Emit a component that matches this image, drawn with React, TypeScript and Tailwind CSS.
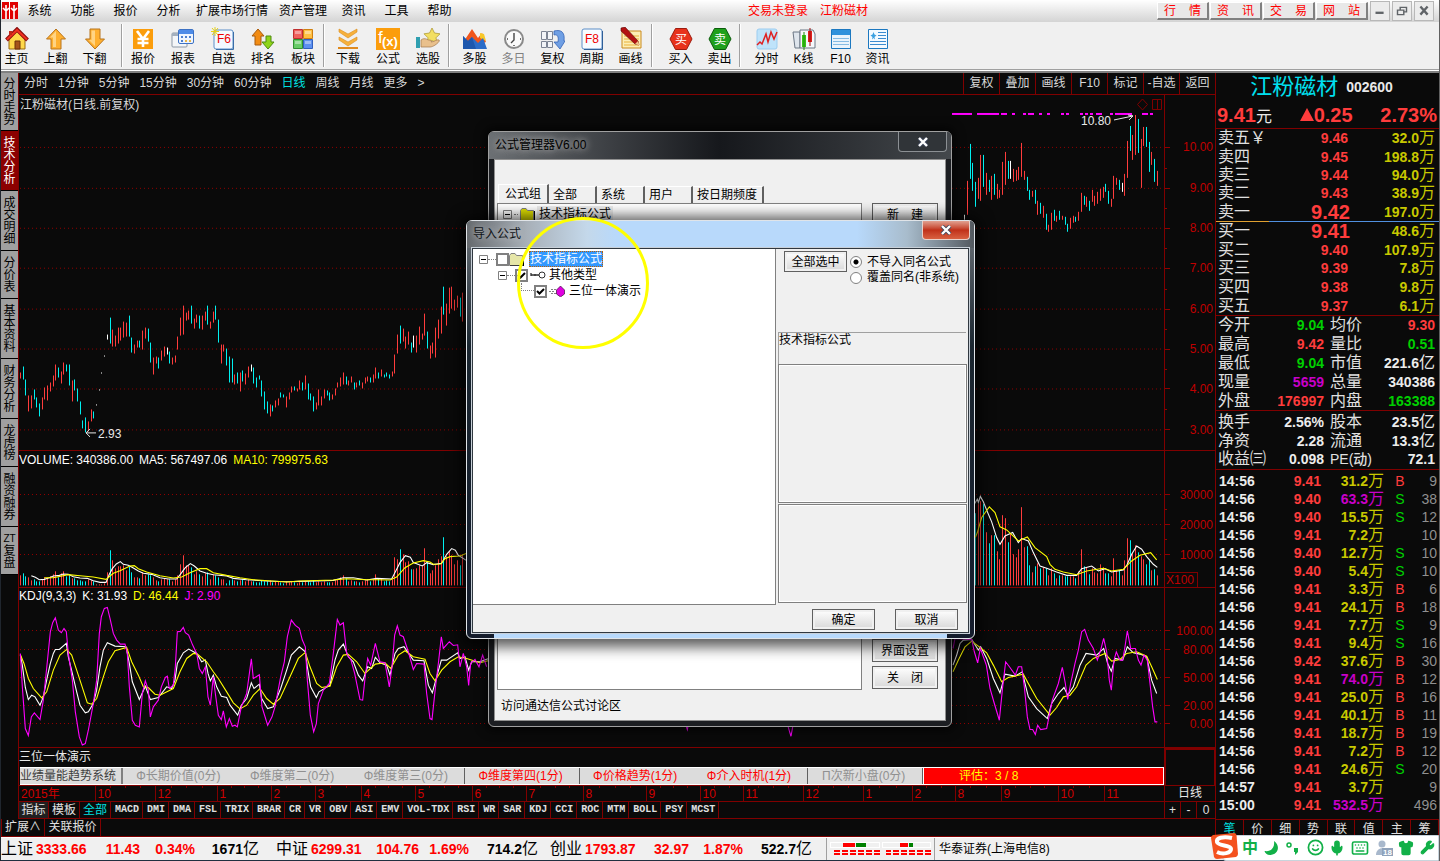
import type { ReactNode } from 'react';
import { Keyboard, Mic, Shirt, Smile, Wrench } from 'lucide-react';

/* ---------- chart data ---------- */

type Block = { x0: number; y0: number; rows: string };

// x, high, low, kind (r up / c down / w flat), volume. Three units make one pixel.
const bars: Block[] = [
  {
    x0: 0,
    y0: 70,
    rows: `61 911 930 r 10,70 891 930 c 12,76 930 978 c 9,85 978 1026 r 8,94 978 1018 r 5,103 960 990 c 6,109 984 1015 c 4,118 1002 1041 c 4,127 984 1020 r 6,133 954 990 r 8,142 950 996 r 7,151 939 966 r 9,160 920 954 r 11,166 887 936 r 14,175 896 927 c 8,184 908 945 r 12,190 879 915 r 14,199 885 906 c 9,208 887 951 c 10,217 933 996 r 7,223 930 962 c 7,232 957 996 c 5,241 998 1038 c 5,247 1053 1077 c 4,256 1046 1090 c 4,265 1056 1085 r 6,274 1020 1056 r 5,280 1026 1047 c 4,289 1005 1008 w 1,298 960 963 w 1,304 909 912 w 1,313 858 861 w 2,322 797 813 w 13,331 744 822 c 35,337 780 831 r 25,346 798 831 r 17,355 774 822 r 19,361 774 812 r 19,370 756 804 r 20,379 759 801 r 15,388 738 801 c 19,394 804 849 c 13,403 825 852 r 8,412 815 837 r 8,418 815 837 c 7,427 783 840 r 13,436 774 807 r 10,445 777 816 c 11,451 819 879 c 10,460 864 915 r 8,469 861 882 r 5,475 864 897 c 4,484 843 873 r 6,493 831 861 r 7,502 834 855 w 6,508 846 882 c 6,517 864 885 r 4,526 858 879 r 6,532 801 840 r 10,541 744 798 r 21,550 708 795 r 30,559 729 753 r 20,565 723 750 r 20,574 708 762 c 18,583 749 780 r 11,589 735 759 r 14,598 738 777 c 11,607 738 780 r 9,616 726 753 r 12,622 708 765 c 13,631 756 777 r 6,640 726 759 r 11,646 708 750 c 10,655 750 819 c 8`,
  },
  {
    x0: 220,
    y0: 270,
    rows: `4 225 282 r 6,10 225 246 r 6,19 237 288 c 2,28 261 339 c 5,37 267 339 c 6,43 315 345 r 5,52 309 342 c 4,61 309 366 r 5,67 303 336 c 6,76 312 345 r 4,85 291 324 r 6,94 285 306 w 4,100 294 342 c 4,109 324 354 c 3,118 318 330 c 3,124 333 381 c 5,133 366 420 c 4,142 396 432 c 4,151 405 441 r 5,157 408 426 c 3,166 393 414 r 4,175 387 408 r 4,181 369 384 c 3,190 375 384 c 2,199 381 414 r 4,208 369 390 r 3,214 351 369 r 4,223 351 363 c 3,232 357 366 r 2,238 333 360 r 3,247 339 363 c 3,256 318 360 r 4,265 342 390 c 4,271 372 393 c 3,280 381 426 c 5,289 399 420 r 3,295 360 408 r 4,304 381 408 r 3,313 360 387 r 4,322 363 378 c 3,328 369 393 c 3,337 375 390 r 3,346 357 378 r 5,352 339 354 r 6,361 324 351 r 8,370 309 345 r 10,379 321 345 c 7,385 333 348 r 4,394 321 339 r 5,403 339 360 c 4,409 339 354 r 4,418 333 348 c 3,427 339 357 r 4,436 324 342 r 5,442 321 336 r 6,451 324 339 c 4,460 315 339 r 6,466 294 327 r 11,475 309 327 c 7,484 300 321 r 7,493 315 324 c 4,499 309 321 c 5,508 315 327 c 4,517 306 321 r 6,523 255 312 r 28,532 195 252 r 26,541 168 222 c 36,550 177 216 r 31,556 201 237 r 23,565 186 225 r 24,574 219 249 c 16,580 198 234 w 16,589 198 249 r 17,598 171 225 r 20,607 192 210 r 19,613 132 198 r 37,622 186 237 c 23,631 228 267 r 12,637 219 252 r 15,646 174 264 r 20,655 150 207 r 26,664 111 192 r 29,670 51 135 c 48,679 102 168 r 29,688 54 132 r 34,694 51 117 r 30,703 90 123 r 21,712 78 114 r 25,721 84 141 c 20,727 69 156 r 31`,
  },
  {
    x0: 940,
    y0: 0,
    rows: `73 645 660 w 60,82 543 645 r 70,91 432 537 c 75,97 489 573 c 70,106 546 621 c 72,115 534 597 r 81,121 465 603 r 84,130 465 561 c 81,139 519 585 r 53,148 540 576 c 42,154 528 600 r 50,163 522 585 c 50,172 552 597 r 34,178 570 594 r 26,187 486 585 r 70,196 456 555 r 67,205 483 537 c 43,211 483 537 w 51,220 507 546 r 31,229 510 543 r 28,235 501 540 r 36,244 429 531 r 78,253 513 540 r 38,262 531 573 c 39,268 570 600 c 20,277 573 591 r 13,286 570 612 c 19,292 603 645 r 22,301 609 642 c 17,310 618 655 r 18,319 642 690 c 17,325 675 696 r 10,334 639 690 r 17,343 630 663 c 12,349 648 666 r 7,358 633 660 c 10,367 648 660 r 10,376 651 675 c 9,382 672 696 c 9,391 654 687 r 9,400 648 669 r 9,406 651 666 c 7,415 636 663 r 14,424 579 636 r 36,433 588 615 c 19,439 591 621 r 18,448 603 633 c 11,457 570 606 r 17,463 588 618 r 13,472 576 612 r 12,481 567 603 r 21,490 561 594 r 18,496 552 576 c 12,505 573 612 c 12,514 597 621 r 9,520 528 597 r 27,529 534 555 r 15,538 540 570 c 15,547 549 576 w 10,553 522 588 r 25,562 423 534 r 47,571 378 453 c 45,577 405 480 r 32,586 345 465 r 40,595 357 459 c 33,604 417 564 r 29,610 381 438 r 26,619 381 441 c 21,628 426 516 c 25,634 456 495 r 15,643 477 546 c 16,652 513 558 r 10`,
  },
];

const barColor: Record<string, string> = { r: '#ff3c3c', c: '#00f0f0', w: '#ffffff' };

const candles = bars.flatMap(({ x0, y0, rows }) =>
  rows.split(',').map((row) => {
    const [x, high, low, kind, vol] = row.split(' ');
    return {
      x: x0 + Math.floor(+x / 3),
      top: y0 + Math.floor(+high / 3),
      height: Math.max(1, Math.round((+low - +high) / 3)),
      fill: barColor[kind],
      volFill: kind === 'c' ? barColor.c : barColor.r,
      vol: +vol,
    };
  }),
);

const LEFT = 'translate(0 440) scale(0.33333)';
const RIGHT = 'translate(940 470) scale(0.33333)';

const volumeLines = [
  { t: LEFT, c: '#fff', p: '94,409 106,414 118,421 133,420 148,415 160,410 178,408 190,404 205,405 220,412 240,416 262,417 280,424 300,429 318,429 328,405 337,388 349,374 361,367 370,375 385,378 400,386 415,395 430,402 455,405 480,415 505,419 530,419 541,405 556,385 571,373 583,380 600,395 620,402 640,406 680,410 700,417 740,421 800,425 860,427 900,426 950,425 1000,423 1030,415 1060,415 1100,422 1130,417 1175,419 1190,390 1200,370 1216,349 1231,354 1240,370 1267,380 1280,370 1300,376 1325,372 1340,345 1355,328 1366,333 1375,348 1400,364' },
  { t: LEFT, c: '#ff0', p: '133,415 160,415 205,406 240,409 280,413 318,420 340,402 360,394 390,380 403,379 415,388 440,398 480,409 520,416 545,413 570,400 600,388 620,388 640,400 680,408 720,415 760,421 860,428 900,425 1000,422 1040,418 1100,421 1130,421 1170,422 1190,413 1215,385 1240,371 1270,364 1290,368 1300,375 1322,374 1335,358 1350,352 1380,350 1400,342' },
  { t: RIGHT, c: '#fff', p: '100,110 112,90 115,100 121,82 130,98 142,128 155,158 170,205 180,225 195,200 218,190 235,220 245,208 265,215 280,250 300,290 320,297 350,308 380,318 410,318 425,298 455,290 475,305 495,298 515,308 550,302 562,285 575,255 590,230 605,240 620,262 640,285 652,294' },
  { t: RIGHT, c: '#ff0', p: '106,205 112,190 125,145 148,113 165,130 180,173 200,182 235,215 262,203 285,235 320,262 330,285 345,300 370,308 410,316 440,305 490,297 515,305 550,300 575,275 600,258 632,250 650,272' },
];

const kdjLines = [
  { t: LEFT, c: '#fff', p: '61,645 67,675 76,742 85,778 95,765 105,770 120,795 130,770 142,710 151,670 160,640 166,628 178,628 199,610 205,650 217,700 230,755 240,795 256,818 265,815 280,790 290,750 300,680 310,630 322,608 345,618 378,620 388,670 397,725 418,778 436,738 451,778 475,772 500,740 515,745 525,720 532,670 550,638 566,627 590,640 605,665 616,660 624,700 631,722 640,705 650,740 664,768 680,772 690,795 713,825 724,795 740,775 754,728 762,745 778,732 785,775 803,805 820,800 842,745 860,690 874,645 898,620 916,635 922,680 932,740 949,772 957,755 990,735 1005,660 1015,630 1030,612 1045,650 1060,665 1075,705 1088,722 1103,680 1115,685 1126,652 1140,668 1160,675 1170,705 1185,640 1195,625 1212,620 1240,660 1272,662 1285,735 1297,758 1310,710 1324,660 1340,660 1373,638 1380,655 1395,650 1406,690 1415,665 1440,665 1464,656' },
  { t: LEFT, c: '#ff0', p: '61,643 72,670 85,715 100,745 125,773 140,755 160,690 180,645 200,628 215,645 235,705 262,788 275,792 290,775 310,710 325,665 345,632 380,622 395,665 415,705 430,740 445,742 465,762 480,765 520,745 540,695 560,655 580,640 592,642 620,665 640,695 655,715 680,755 700,788 720,806 740,795 760,765 780,745 800,775 820,792 840,775 870,710 895,655 916,637 930,680 950,730 965,742 990,738 1010,680 1030,645 1045,643 1070,665 1095,700 1126,672 1155,668 1172,685 1195,645 1215,632 1240,650 1275,657 1290,700 1305,722 1325,690 1350,665 1375,650 1400,655 1440,668 1464,662' },
  { t: LEFT, c: '#f0f', p: '61,640 67,740 76,865 85,886 94,830 103,818 120,838 130,780 142,665 151,575 158,548 166,533 175,570 184,578 192,565 199,575 205,640 217,720 226,815 238,890 247,914 256,910 265,870 280,790 290,720 298,580 304,530 313,505 322,502 330,535 340,580 350,600 361,612 375,612 382,640 388,740 397,840 406,855 418,860 427,760 436,722 445,750 451,830 460,800 475,780 484,740 496,712 502,708 508,745 520,735 526,680 532,575 541,574 550,562 556,578 566,585 578,615 590,640 598,685 607,700 616,680 624,770 631,795 640,710 646,760 655,825 664,838 670,812 679,860 688,835 697,858 705,855 712,860 724,800 740,760 754,656 760,715 778,704 786,800 803,855 816,830 825,800 842,710 853,665 862,590 874,540 886,556 898,565 907,600 916,620 922,720 931,825 941,875 949,850 955,790 970,750 988,730 1000,640 1012,538 1020,555 1030,548 1040,640 1053,660 1064,700 1080,778 1088,780 1095,715 1103,655 1112,675 1126,610 1140,665 1155,668 1168,740 1176,680 1184,585 1192,557 1200,585 1210,590 1225,635 1240,688 1250,670 1272,672 1280,760 1290,835 1296,838 1306,745 1315,670 1324,590 1330,625 1348,605 1360,616 1373,614 1380,680 1390,640 1400,680 1406,736 1412,670 1425,658 1437,680 1448,645 1460,680' },
  { t: LEFT, c: '#f0f', p: '2050,830 2062,868 2070,830' },
  { t: LEFT, c: '#f0f', p: '2355,820 2366,865 2373,888 2379,855 2385,820' },
  { t: RIGHT, c: '#fff', p: '39,585 50,555 60,520 70,510 95,508 115,540 122,530 140,565 160,625 180,668 195,612 225,618 247,605 255,640 265,680 290,715 322,745 335,700 355,670 372,652 383,675 400,650 420,585 438,550 470,555 491,535 503,580 514,603 525,565 548,570 562,530 580,548 600,552 620,560 635,630 650,670' },
  { t: RIGHT, c: '#ff0', p: '39,605 55,570 75,530 95,513 120,532 140,548 160,585 185,635 205,622 250,612 265,640 290,685 330,735 350,712 370,680 390,675 410,650 438,585 460,565 495,550 515,573 540,568 560,550 590,545 620,558 635,590 652,628' },
  { t: RIGHT, c: '#f0f', p: '39,535 45,505 95,508 103,545 113,578 121,535 130,560 139,585 150,655 163,700 178,750 188,650 197,575 210,592 226,615 235,590 245,590 253,650 262,740 270,778 278,778 286,793 293,765 302,778 320,775 328,735 337,690 355,640 367,592 376,640 383,688 392,640 405,580 415,540 425,485 434,478 445,510 460,535 472,570 482,540 491,505 500,545 508,630 514,660 522,570 529,545 540,570 548,570 555,530 562,482 572,535 586,535 595,570 603,585 612,555 622,570 630,640 638,710 645,755 652,755' },
];

const signalMarks = [
  [952, 20], [977, 22], [1001, 6], [1012, 3], [1023, 3], [1028, 6], [1039, 3], [1047, 3], [1061, 3], [1066, 3],
  [1080, 3], [1085, 3], [1090, 3], [1096, 6], [1110, 3], [1115, 17], [1142, 6], [1150, 3],
];

const months: [number, string][] = [
  [95, '10'], [155, '12'], [217, '1'], [271, '2'], [315, '3'], [361, '4'], [415, '5'], [472, '6'], [526, '7'], [583, '8'],
  [646, '9'], [700, '10'], [743, '11'], [803, '12'], [863, '1'], [912, '2'], [955, '8'], [1001, '9'], [1058, '10'], [1104, '11'],
];

/* ---------- text data ---------- */

const sideTabs = ['分 时 走 势', '技 术 分 析', '成 交 明 细', '分 价 表', '基 本 资 料', '财 务 分 析', '龙 虎 榜', '融 资 融 券', 'ZT 复 盘'];
const periods = ['分时', '1分钟', '5分钟', '15分钟', '30分钟', '60分钟', '日线', '周线', '月线', '更多', '>'];
const chartTools = ['复权', '叠加', '画线', 'F10', '标记', '-自选', '返回'];
const indicators = ['MACD', 'DMI', 'DMA', 'FSL', 'TRIX', 'BRAR', 'CR', 'VR', 'OBV', 'ASI', 'EMV', 'VOL-TDX', 'RSI', 'WR', 'SAR', 'KDJ', 'CCI', 'ROC', 'MTM', 'BOLL', 'PSY', 'MCST'];

const scores = [
  { text: 'Φ长期价值(0分)', hot: false, bar: false },
  { text: 'Φ维度第二(0分)', hot: false, bar: false },
  { text: 'Φ维度第三(0分)', hot: false, bar: true },
  { text: 'Φ维度第四(1分)', hot: true, bar: true },
  { text: 'Φ价格趋势(1分)', hot: true, bar: false },
  { text: 'Φ介入时机(1分)', hot: true, bar: true },
  { text: 'Π次新小盘(0分)', hot: false, bar: true },
];

const asks = [
  ['卖五', '9.46', '32.0'],
  ['卖四', '9.45', '198.8'],
  ['卖三', '9.44', '94.0'],
  ['卖二', '9.43', '38.9'],
  ['卖一', '9.42', '197.0'],
];
const bids = [
  ['买一', '9.41', '48.6'],
  ['买二', '9.40', '107.9'],
  ['买三', '9.39', '7.8'],
  ['买四', '9.38', '9.8'],
  ['买五', '9.37', '6.1'],
];

const RED = 'text-[#ff3c3c]';
const GREEN = 'text-[#00d000]';
const PURPLE = 'text-[#c800c8]';
const WHITE = 'text-[#ececec]';

const stats = [
  ['今开', '9.04', GREEN, '均价', '9.30', RED],
  ['最高', '9.42', RED, '量比', '0.51', GREEN],
  ['最低', '9.04', GREEN, '市值', '221.6亿', WHITE],
  ['现量', '5659', PURPLE, '总量', '340386', WHITE],
  ['外盘', '176997', RED, '内盘', '163388', GREEN],
];
const ratios = [
  ['换手', '2.56%', WHITE, '股本', '23.5亿', WHITE],
  ['净资', '2.28', WHITE, '流通', '13.3亿', WHITE],
  ['收益㈢', '0.098', WHITE, 'PE(动)', '72.1', WHITE],
];

const ticks = [
  ['14:56', '9.41', '31.2', 'B', '9'],
  ['14:56', '9.40', '63.3', 'S', '38'],
  ['14:56', '9.40', '15.5', 'S', '12'],
  ['14:56', '9.41', '7.2', '', '10'],
  ['14:56', '9.40', '12.7', 'S', '10'],
  ['14:56', '9.40', '5.4', 'S', '10'],
  ['14:56', '9.41', '3.3', 'B', '6'],
  ['14:56', '9.41', '24.1', 'B', '18'],
  ['14:56', '9.41', '7.7', 'S', '9'],
  ['14:56', '9.41', '9.4', 'S', '16'],
  ['14:56', '9.42', '37.6', 'B', '30'],
  ['14:56', '9.41', '74.0', 'B', '12'],
  ['14:56', '9.41', '25.0', 'B', '16'],
  ['14:56', '9.41', '40.1', 'B', '11'],
  ['14:56', '9.41', '18.7', 'B', '19'],
  ['14:56', '9.41', '7.2', 'B', '12'],
  ['14:56', '9.41', '24.6', 'S', '20'],
  ['14:57', '9.41', '3.7', '', '9'],
  ['15:00', '9.41', '532.5', '', '496'],
];

/* ---------- toolbar icons ---------- */

function Ico({ children }: { children: ReactNode }) {
  return (
    <svg aria-hidden viewBox="0 0 24 24" className="h-6 w-6">
      {children}
    </svg>
  );
}

const icons: Record<string, ReactNode> = {
  主页: (
    <Ico>
      <path d="M4 12 12 4l8 8v10H4z" fill="#ffd84a" stroke="#9a6a10" />
      <path d="M10 14h5v8h-5z" fill="#a5541a" stroke="#6e3008" />
      <path d="M1.500 13 12 2.500 22.500 13" fill="none" stroke="#8c0f0f" strokeWidth="4" />
      <path d="M2 12.500 12 3 22 12.500" fill="none" stroke="#f03020" strokeWidth="2" />
      <path d="M4 4h3v4H4z" fill="#c02818" />
    </Ico>
  ),
  上翻: (
    <Ico>
      <path d="M12 2 2.500 12H7v10h10V12h4.500z" fill="#ffb030" stroke="#b8741c" strokeLinejoin="round" />
      <path d="M12 4 6 10.500h3V20h3z" fill="#ffd484" />
    </Ico>
  ),
  下翻: (
    <Ico>
      <path d="M12 22 2.500 12H7V2h10v10h4.500z" fill="#ffb030" stroke="#b8741c" strokeLinejoin="round" />
      <path d="M8.500 3.500H12V19l-6-6h2.500z" fill="#ffd484" />
    </Ico>
  ),
  报价: (
    <Ico>
      <path d="M2 2h20v20H2z" fill="#fb9d0c" />
      <path d="m6 4 6 8 6-8M12 11v9M6.500 12h11M6.500 16h11" fill="none" stroke="#fff" strokeWidth="2.600" />
    </Ico>
  ),
  报表: (
    <Ico>
      <rect x="1" y="6" width="15" height="14" rx="1" fill="#f4f6f8" stroke="#8d98a5" />
      <path d="M1 6h15v3H1z" fill="#a4b0be" />
      <rect x="7.500" y="2.500" width="15" height="14" rx="1.500" fill="#eef5ff" stroke="#3d72c4" />
      <path d="M8 3h14v4H8z" fill="#4d8be8" />
      <path d="M10 9h2v2h-2zM14 9h2v2h-2zM18 9h2v2h-2zM10 13h2v2h-2z" fill="#4d7fcf" />
      <path d="M14 13h2v2h-2zM18 13h2v2h-2z" fill="#e9b64a" />
    </Ico>
  ),
  自选: (
    <Ico>
      <rect x="3" y="3" width="19" height="19" rx="2" fill="#f4f9ff" stroke="#5c8fc8" />
      <path d="M22.500 5v17.500H5" fill="none" stroke="#3a6ea8" />
      <path d="M4 0v9M0 4.500h8M1 1l6 7M7 1 1 8" stroke="#e8d018" />
      <text x="6" y="16" fontSize="12" fill="#f00000">F6</text>
    </Ico>
  ),
  排名: (
    <Ico>
      <path d="m7 2-6 7h3v9h6V9h3z" fill="#f28c14" stroke="#a85a0c" />
      <path d="m17 22 6-7h-3V9h-5v6h-4z" fill="#8fd418" stroke="#4f8c10" />
    </Ico>
  ),
  板块: (
    <Ico>
      <path d="M2.500 2.500h9v9h-9z" fill="#f0605c" stroke="#c03030" />
      <path d="M12.500 2.500h9v9h-9z" fill="#ffc043" stroke="#d08010" />
      <path d="M2.500 12.500h9v9h-9z" fill="#66cc66" stroke="#309030" />
      <path d="M12.500 12.500h9v9h-9z" fill="#5c90f0" stroke="#3060c0" />
      <path d="M4 4h6v3H4zM14 4h6v3h-6zM4 14h6v3H4zM14 14h6v3h-6z" fill="#fff" opacity=".4" />
    </Ico>
  ),
  下载: (
    <Ico>
      <path d="m3 2 9 5 9-5v3l-9 6-9-6zM3 10l9 5 9-5v3l-9 6-9-6z" fill="#f7b13c" stroke="#d98c1c" strokeWidth=".6" />
      <path d="M2 20h20v2H2z" fill="#e08a1e" />
    </Ico>
  ),
  公式: (
    <Ico>
      <path d="M0 1h24v22H0z" fill="#fb9d0c" />
      <text x="2" y="16" fontSize="17" fill="#fff">f</text>
      <text x="6" y="19" fontSize="13" fontWeight="bold" fill="#fff">(x)</text>
    </Ico>
  ),
  选股: (
    <Ico>
      <path d="m16 1 2.500 5 5.500.8-4 4 1 5.200-5-2.500-5 2.500 1-5.200-4-4 5.500-.8z" fill="#f3df62" stroke="#a8922a" strokeWidth=".7" />
      <path d="M5 13c4-3 6 0 8 0s3 1 2 2c3 0 6-3 8-2s-5 7-9 7H5z" fill="#e9c08c" stroke="#a1774a" strokeWidth=".7" />
      <path d="M0 10h4v11H0z" fill="#2f9fb0" />
    </Ico>
  ),
  多股: (
    <Ico>
      <path d="m1 14 8-12 6 9 4-5 4 9-10 4z" fill="#f0551c" />
      <path d="m17 6 4 1 2 7-6-3z" fill="#f8c828" />
      <path d="m0 9 5 5 4-4 6 6 5-5 4 11H0z" fill="#2b6cc8" />
      <path d="m0 9 5 5 4-4 4 12H0z" fill="#1d57ad" />
    </Ico>
  ),
  多日: (
    <Ico>
      <circle cx="12" cy="12" r="9" fill="#fafafa" stroke="#8a8a8a" strokeWidth="2" />
      <path d="M12 6v7l-3 3M5 12h1M18 12h1M12 18v1" fill="none" stroke="#444" strokeWidth="1.400" />
    </Ico>
  ),
  复权: (
    <Ico>
      <path d="M.5 4.500h5v8h-5zM6.500 4.500h5v8h-5zM.5 14.500h5v6h-5zM6.500 14.500h5v6h-5z" fill="#f2f4f8" stroke="#7c8494" />
      <path d="M13 4c8-2 11 2 10 10h1l-5 8-6-7h4c1-6-1-8-4-7z" fill="#6f9fe4" stroke="#3463b5" strokeWidth=".8" />
    </Ico>
  ),
  周期: (
    <Ico>
      <rect x="2" y="2" width="20" height="20" rx="2" fill="#f8fbff" stroke="#5c8fc8" />
      <path d="M22.500 4v18.500H4" fill="none" stroke="#2f5f98" />
      <text x="5" y="16" fontSize="12" fill="#f00000">F8</text>
    </Ico>
  ),
  画线: (
    <Ico>
      <path d="M3 4h19v17H3z" fill="#fdeeb4" stroke="#c98a1c" />
      <path d="M5 9h15M5 12h15M5 15h15M5 18h15" stroke="#e9b13a" />
      <path d="m2 1 4-1 13 14 1 4-4-1L2 4z" fill="#b31212" stroke="#5c0808" strokeWidth=".6" />
      <path d="m16 17 3-3 1.500 4.500z" fill="#f1c48c" />
    </Ico>
  ),
  买入: (
    <Ico>
      <path d="M6.500 1.500h11L23 12l-5.500 10.500h-11L1 12z" fill="#e8321c" stroke="#9c1c10" />
      <text x="6" y="17" fontSize="12" fill="#fff">买</text>
    </Ico>
  ),
  卖出: (
    <Ico>
      <path d="M6.500 1.500h11L23 12l-5.500 10.500h-11L1 12z" fill="#1fa01c" stroke="#0c5c0c" />
      <text x="6" y="17" fontSize="12" fill="#fff">卖</text>
    </Ico>
  ),
  分时: (
    <Ico>
      <rect x="2" y="2" width="20" height="20" rx="2" fill="#bfe3fa" stroke="#9ccdf0" />
      <path d="m2 18 3-3 2 2 4-10 2 8 3-10 3 7 3-7" fill="none" stroke="#e02020" strokeWidth="1.500" />
    </Ico>
  ),
  K线: (
    <Ico>
      <path d="M1 5h7v16H3z" fill="#dfe5ec" stroke="#6b7684" />
      <path d="M8 3h13l2 4v14H8z" fill="#f6f8fb" stroke="#6b7684" />
      <path d="M10 8h4v12h-4z" fill="#38c818" />
      <path d="M12 5v18" stroke="#1f8c0c" />
      <path d="M16 4h4v11h-4z" fill="#e0201c" />
      <path d="M18 1v18" stroke="#9c0c0c" />
    </Ico>
  ),
  F10: (
    <Ico>
      <path d="M2.500 2.500h19v19h-19z" fill="#e9f4fc" stroke="#1c78c0" />
      <path d="M3 3h18v5H3z" fill="#2f92dc" />
      <path d="M4 11.500h16M4 14.500h16M4 17.500h16" stroke="#86bce4" />
    </Ico>
  ),
  资讯: (
    <Ico>
      <path d="M2.500 2.500h19v19h-19z" fill="#f4faff" stroke="#1c78c0" />
      <path d="M12 5.500h8M12 8.500h8M12 11.500h8M4 14.500h16M4 17.500h16" stroke="#3c8cd0" />
      <path d="m7.500 5 1 2.500 2 1-2 1.500.5 2.500-1.500-1.500L6 12.500l.5-2.500-2-1.500 2-1z" fill="#3ca0e0" />
    </Ico>
  ),
};

function ToolGroup({ items, width, className = '' }: { items: string[]; width: string; className?: string }) {
  return (
    <div className={`flex ${className}`}>
      {items.map((name) => (
        <button key={name} type="button" className={`flex flex-col items-center pt-[5px] ${width} ${name === '多日' ? 'text-[#808080]' : 'text-black'}`}>
          {icons[name]}
          <span className="text-xs leading-4">{name}</span>
        </button>
      ))}
    </div>
  );
}

const Sep = () => <span className="my-0.5 w-0.5 border-l border-[#a0a0a0] bg-white" />;

/* ---------- top bars ---------- */

function MenuBar() {
  return (
    <header className="flex h-[22px] shrink-0 items-center bg-linear-to-b from-white to-[#d4d4d4] text-xs leading-4">
      <svg aria-hidden viewBox="0 0 16 18" className="ml-px h-[18px] w-4">
        <path d="M0 0h16v17H0z" fill="#e00000" />
        <path d="M4 17V9L1 6M4 9l3-3M4 3v6M12 17V9L9 6M12 9l3-3M12 3v6" stroke="#fff" strokeWidth="1.600" fill="none" />
        <path d="M7.500 0v17" stroke="#fff" />
      </svg>
      <nav className="flex whitespace-nowrap">
        {['系统', '功能', '报价', '分析'].map((m) => (
          <button key={m} type="button" className="w-[43px]">{m}</button>
        ))}
        <button type="button" className="w-[84px]">扩展市场行情</button>
        <button type="button" className="w-[58px]">资产管理</button>
        {['资讯', '工具', '帮助'].map((m) => (
          <button key={m} type="button" className="w-[43px]">{m}</button>
        ))}
      </nav>
      <div className="flex flex-1 justify-center gap-3 pr-0.5 text-[#ff0000]">
        <span>交易未登录</span>
        <span>江粉磁材</span>
      </div>
      <div className="mr-[5px] flex items-center gap-px">
        {['行 情', '资 讯', '交 易', '网 站'].map((b) => (
          <button key={b} type="button" className="h-[18px] w-[52px] border border-r-2 border-b-2 border-white border-r-[#808080] border-b-[#808080] bg-[#e8e8e8] text-[#ff0000]">
            <span className="flex justify-between px-1.5 leading-3.5">
              <span>{b[0]}</span>
              <span>{b[2]}</span>
            </span>
          </button>
        ))}
        <div className="ml-px flex gap-0.5">
          {['M5 12h9', 'M8 9V6h7v5h-3M5 9h7v5H5z', 'm6 5 8 9M14 5l-8 9'].map((d, i) => (
            <button key={d} type="button" aria-label={['最小化', '还原', '关闭'][i]} className="h-5 w-5 border border-[#b8b8b8] bg-[#ececec]">
              <svg viewBox="0 0 20 20" className="h-[18px] w-[18px]">
                <path d={d} fill="none" stroke="#606468" strokeWidth={i === 1 ? 1.6 : 2.6} />
              </svg>
            </button>
          ))}
        </div>
      </div>
    </header>
  );
}

function ToolBar() {
  return (
    <div className="flex h-[51px] shrink-0 flex-col bg-[#f0f0f0]">
      <div className="flex h-[47px]">
        <ToolGroup items={['主页', '上翻', '下翻']} width="w-[39px]" className="-ml-1" />
        <span className="w-[7px]" />
        <Sep />
        <ToolGroup items={['报价', '报表', '自选', '排名', '板块']} width="w-10" />
        <Sep />
        <ToolGroup items={['下载', '公式', '选股']} width="w-10" className="ml-[3px]" />
        <Sep />
        <ToolGroup items={['多股', '多日', '复权', '周期', '画线']} width="w-[39px]" className="mr-px ml-[5px]" />
        <Sep />
        <ToolGroup items={['买入', '卖出']} width="w-[39px]" className="ml-2" />
        <Sep />
        <ToolGroup items={['分时', 'K线', 'F10', '资讯']} width="w-[37px]" className="ml-[7px]" />
      </div>
      <div className="h-px bg-[#a0a0a0]" />
      <div className="h-px bg-white" />
      <div className="h-0.5 bg-[#808080]" />
    </div>
  );
}

/* ---------- charts ---------- */

type AxisProps = { top: number; height: number; labels: [number, string][]; half?: boolean; children?: ReactNode };

function Axis({ top, height, labels, half, children }: AxisProps) {
  const pct = (y: number) => `${((y + 0.5 - top) / height) * 100}%`;
  const mids = half ? labels.slice(1).map(([y], i) => Math.round((y + labels[i][0]) / 2)) : [];
  return (
    <div className="relative w-[51px] shrink-0 border-l border-[#800000]">
      <svg className="absolute h-full w-full text-xs" fill="#c00000">
        {labels.map(([y, text]) => (
          <g key={text}>
            <line x1="0" x2="5" y1={pct(y)} y2={pct(y)} stroke="#900000" shapeRendering="crispEdges" />
            <text x="48" y={pct(y + 4)} textAnchor="end">{text}</text>
          </g>
        ))}
        {mids.map((y) => (
          <line key={y} x1="0" x2="2" y1={pct(y)} y2={pct(y)} stroke="#900000" shapeRendering="crispEdges" />
        ))}
      </svg>
      {children}
    </div>
  );
}

function Grid({ ys }: { ys: number[] }) {
  return (
    <>
      {ys.map((y) => (
        <line key={y} x1="20" x2="1163" y1={y + 0.5} y2={y + 0.5} stroke="#900000" strokeDasharray="1 3" shapeRendering="crispEdges" />
      ))}
    </>
  );
}

function Plot({ top, height, children }: { top: number; height: number; children: ReactNode }) {
  return (
    <svg viewBox={`19 ${top} 1145 ${height}`} preserveAspectRatio="none" className="min-h-0 min-w-0 flex-1">
      {children}
    </svg>
  );
}

function Lines({ data }: { data: { t: string; c: string; p: string }[] }) {
  return (
    <>
      {data.map((l) => (
        <polyline key={l.p} points={l.p} transform={l.t} fill="none" stroke={l.c} strokeWidth="3.300" />
      ))}
    </>
  );
}

function PriceChart() {
  const levels: [number, string][] = [
    [147, '10.00'], [188, '9.00'], [228, '8.00'], [268, '7.00'], [309, '6.00'], [349, '5.00'], [389, '4.00'], [430, '3.00'],
  ];
  return (
    <section className="relative flex min-h-0 flex-[357_1_0px] border-b border-[#800000]">
      <h2 className="absolute top-0.5 left-px text-xs leading-4 text-[#d8d8d8]">江粉磁材(日线.前复权)</h2>
      <Plot top={95} height={356}>
        <Grid ys={levels.map(([y]) => y)} />
        {signalMarks.map(([x, w]) => (
          <rect key={x} x={x} y="113" width={w} height="2" fill="#f0f" />
        ))}
        {candles.map((c, i) => (
          <rect key={i} x={c.x} y={c.top} width="1" height={c.height} fill={c.fill} />
        ))}
        <g fill="none" stroke="#e8e8e8">
          <path d="m1114 120 19-4m-5-1 5 1-4 4M96 433.500H86m4-4-4 4 4 4" />
        </g>
        <g fill="#e8e8e8" fontSize="12">
          <text x="1081" y="125">10.80</text>
          <text x="98" y="439">2.93</text>
        </g>
        <path d="m1142.500 99 5 5.500-5 5.500-5-5.500zM1152.500 99.500h9v10h-9zM1157.500 99v10" fill="none" stroke="#800000" />
      </Plot>
      <Axis top={95} height={356} labels={levels} half />
    </section>
  );
}

function VolumeChart() {
  const levels: [number, string][] = [[495, '30000'], [525, '20000'], [555, '10000']];
  return (
    <section className="relative flex min-h-0 flex-[136_1_0px] border-b border-[#800000]">
      <h3 className="absolute top-px left-0 flex gap-1.5 text-xs leading-4 text-white">
        <span>VOLUME: 340386.00</span>
        <span>MA5: 567497.06</span>
        <span className="text-[#ffff00]">MA10: 799975.63</span>
      </h3>
      <Plot top={452} height={135}>
        <Grid ys={levels.map(([y]) => y)} />
        {candles.map((c, i) => (
          <rect key={i} x={c.x} y={586 - c.vol} width="1" height={c.vol} fill={c.volFill} />
        ))}
        <Lines data={volumeLines} />
      </Plot>
      <Axis top={452} height={135} labels={levels} half>
        <span className="absolute bottom-0 left-0 w-[33px] border-t border-r border-[#800000] pl-px text-xs leading-3.5 text-[#c00000]">X100</span>
      </Axis>
    </section>
  );
}

function KdjChart() {
  const levels: [number, string][] = [[630, '100.00'], [649, '80.00'], [677, '50.00'], [705, '20.00'], [723, '0.00']];
  return (
    <section className="relative flex min-h-0 flex-[160_1_0px] border-b border-[#800000]">
      <h3 className="absolute top-0 left-0 flex gap-1.5 text-xs leading-4 text-white">
        <span>KDJ(9,3,3)</span>
        <span>K: 31.93</span>
        <span className="text-[#ffff00]">D: 46.44</span>
        <span className="text-[#ff00ff]">J: 2.90</span>
      </h3>
      <Plot top={588} height={159}>
        <Grid ys={levels.map(([y]) => y)} />
        <Lines data={kdjLines} />
      </Plot>
      <Axis top={588} height={159} labels={levels} />
    </section>
  );
}

function ScorePanel() {
  return (
    <section className="flex h-[38px] shrink-0 border-b border-[#800000] text-xs leading-4">
      <div className="flex min-w-0 flex-1 flex-col">
        <h3 className="mt-px h-[18px] text-[#e8e8e8]">三位一体演示</h3>
        <div className="ml-px flex h-[18px] whitespace-nowrap border-y border-white bg-[#dcdcdc] leading-4">
          <span className="w-[103px] border-r-2 border-[#808080] text-[#404040]">业绩量能趋势系统</span>
          {scores.map((s) => (
            <span key={s.text} className={`flex-1 pr-[3px] text-center ${s.hot ? 'text-[#ff0000]' : 'text-[#909090]'} ${s.bar ? 'border-r border-[#606060]' : ''}`}>
              {s.text}
            </span>
          ))}
          <span className="w-[241px] border-r border-l border-white bg-[#ff0000] pl-[35px] text-[#ffff00]">评估：3 / 8</span>
        </div>
      </div>
      <div className="w-[51px] shrink-0 border-2 border-r border-b-0 border-[#800000]" />
    </section>
  );
}

function Timeline() {
  const pct = (x: number) => `${((x - 18.5) / 1145) * 100}%`;
  const minor = months.slice(0, -1).flatMap(([x], i) => {
    const gap = months[i + 1][0] - x;
    const n = Math.round(gap / 15);
    return Array.from({ length: n - 1 }, (_, k) => x + Math.round(((k + 1) * gap) / n));
  });
  return (
    <div className="flex h-4 shrink-0 border-b border-[#800000] text-xs">
      <svg className="h-[15px] min-w-0 flex-1" fill="#d00000">
        {minor.map((x) => (
          <line key={x} x1={pct(x)} x2={pct(x)} y1="0" y2="2" stroke="#800000" shapeRendering="crispEdges" />
        ))}
        <text x="2" y="12">2015年</text>
        {months.map(([x, label]) => (
          <g key={x}>
            <line x1={pct(x)} x2={pct(x)} y1="0" y2="15" stroke="#800000" shapeRendering="crispEdges" />
            <text x={pct(x + 2)} y="12">{label}</text>
          </g>
        ))}
      </svg>
      <span className="w-[51px] border-l border-[#800000] text-center leading-[15px] text-[#e8e8e8]">日线</span>
    </div>
  );
}

function IndicatorBar() {
  return (
    <div className="flex h-[17px] shrink-0 border-b border-[#800000] text-[#e0e0e0]">
      {['指标', '模板', '全部'].map((t, i) => (
        <button key={t} type="button" className={`h-4 border-r border-[#800000] text-xs leading-4 ${i === 0 ? 'w-[30px] bg-[#202020]' : 'w-[31px]'} ${i === 2 ? 'text-[#00e0e0]' : ''}`}>
          {t}
        </button>
      ))}
      {indicators.map((t) => (
        <button key={t} type="button" className="h-4 border-r border-[#800000] pr-[3px] pl-1 font-['Liberation_Mono',monospace] text-[10px] leading-4 font-bold">
          {t}
        </button>
      ))}
      <div className="ml-auto flex w-[51px] border-l border-[#800000] text-xs leading-4">
        <button type="button" className="w-4 border-r border-[#800000]">+</button>
        <button type="button" className="w-4 border-r border-[#800000]">-</button>
        <button type="button" className="flex-1">0</button>
      </div>
    </div>
  );
}

function ChartArea() {
  return (
    <div className="flex min-w-0 flex-1 flex-col">
      <div className="flex min-h-0 flex-1">
        <div className="w-[18px] shrink-0 border-r border-[#800000]">
          {sideTabs.map((tab, i) => (
            <button
              key={tab}
              type="button"
              className={`flex w-full flex-col items-center border-b border-black px-0.5 text-xs leading-3 ${i === 0 ? 'pt-[5px] pb-1' : 'pt-1.5 pb-[5px]'} ${i === 1 ? 'bg-[#8c0000] text-white' : 'bg-[#a0a0a0] text-black'}`}
            >
              {tab.split(' ').map((ch, k) => (
                <span key={k} className={ch === 'ZT' ? 'text-[10px]' : ''}>{ch}</span>
              ))}
            </button>
          ))}
        </div>
        <div className="flex min-w-0 flex-1 flex-col">
          <div className="flex h-[22px] shrink-0 border-b border-[#800000] text-xs leading-[21px] whitespace-nowrap text-[#d8d8d8]">
            <div className="flex flex-1 gap-2.5 pl-[5px]">
              {periods.map((p) => (
                <button key={p} type="button" className={p === '日线' ? 'text-[#00e0e0]' : ''}>{p}</button>
              ))}
            </div>
            {chartTools.map((t) => (
              <button key={t} type="button" className="w-9 border-l border-[#800000]">{t}</button>
            ))}
          </div>
          <PriceChart />
          <VolumeChart />
          <KdjChart />
          <ScorePanel />
          <Timeline />
          <IndicatorBar />
        </div>
      </div>
      <div className="flex h-[18px] shrink-0 border-b border-[#800000] text-xs leading-[17px] text-[#e0e0e0]">
        <button type="button" className="w-11 border-x border-[#800000]">扩展∧</button>
        <button type="button" className="w-14 border-r border-[#800000]">关联报价</button>
      </div>
    </div>
  );
}

/* ---------- quote panel ---------- */

function Level({ row, big, yen }: { row: string[]; big?: boolean; yen?: boolean }) {
  return (
    <tr>
      <td className="w-[62px] pl-0.5 text-base/[18px] whitespace-nowrap text-[#e0e0e0]">
        {row[0]}
        {yen && '￥'}
      </td>
      <td className={`text-right font-bold ${RED} ${big ? 'text-xl/[18px]' : 'pr-0.5 text-sm/[18px]'}`}>{row[1]}</td>
      <td className="w-[89px] pr-1 text-right text-sm/[18px] font-bold text-[#c8c800]">
        {row[2]}
        <span className="text-base/4 font-normal">万</span>
      </td>
    </tr>
  );
}

function StatRows({ rows }: { rows: string[][] }) {
  return (
    <>
      {rows.map(([a, av, ac, b, bv, bc]) => (
        <tr key={a} className="h-[19px]">
          <th className="w-[54px] pl-0.5 text-left text-base/[18px] font-normal text-[#e0e0e0]">{a}</th>
          <td className={`w-[54px] text-right text-sm/[18px] font-bold ${ac}`}>{av}</td>
          <th className={`w-[50px] pl-1.5 text-left text-[#e0e0e0] ${b.startsWith('PE') ? 'text-sm/[18px] font-medium' : 'text-base/[18px] font-normal'}`}>{b}</th>
          <td className={`pr-1 text-right text-sm/[18px] font-bold ${bc}`}>
            {bv.replace('亿', '')}
            {bv.endsWith('亿') && <span className="text-base/4 font-normal">亿</span>}
          </td>
        </tr>
      ))}
    </>
  );
}

function QuotePanel() {
  return (
    <aside className="flex w-[224px] shrink-0 flex-col border-l border-[#800000] whitespace-nowrap">
      <div className="flex h-7 items-center justify-center gap-2 pr-3">
        <h1 className="text-[22px] leading-7 text-[#00e0f0]">江粉磁材</h1>
        <span className="text-sm leading-4 font-bold text-[#e8e8e8]">002600</span>
      </div>
      <div className={`flex h-[27px] items-center justify-between pr-0.5 pl-px text-xl/7 font-bold ${RED}`}>
        <span>9.41<span className="text-base/4 font-normal text-[#e8e8e8]">元</span></span>
        <span className="flex items-center">
          <svg aria-hidden viewBox="0 0 14 13" className="h-[13px] w-3.5"><path d="M7 0l7 13H0z" fill="#ff3c3c" /></svg>
          0.25
        </span>
        <span>2.73%</span>
      </div>
      <table className="h-[93px] w-full table-fixed border-t border-[#800000]">
        <tbody>
          {asks.map((r, i) => <Level key={r[0]} row={r} big={i === 4} yen={i === 0} />)}
        </tbody>
      </table>
      <div className="flex h-px shrink-0">
        <span className="w-[53px] bg-[#e0a030]" />
        <span className="flex-1 bg-[#5090e0]" />
      </div>
      <table className="h-[93px] w-full table-fixed">
        <tbody>
          {bids.map((r, i) => <Level key={r[0]} row={r} big={i === 0} />)}
        </tbody>
      </table>
      <table className="w-full table-fixed border-y border-[#800000]">
        <tbody><StatRows rows={stats} /></tbody>
      </table>
      <table className="mt-px w-full table-fixed border-b border-[#800000]">
        <tbody><StatRows rows={ratios} /></tbody>
      </table>
      <table className="mt-0.5 w-full table-fixed text-sm/[18px] font-bold">
        <tbody>
          {ticks.map(([time, price, vol, side, n], i) => (
            <tr key={i} className="h-[18px]">
              <td className="w-[50px] pl-[3px] text-[#ececec]">{time}</td>
              <td className={`w-[55px] text-right ${RED}`}>{price}</td>
              <td className={`w-[63px] text-right ${+vol > 50 ? PURPLE : 'text-[#c8c800]'}`}>
                {vol}
                <span className="text-base/4 font-normal">万</span>
              </td>
              <td className={`w-7 pl-1 text-center font-normal ${side === 'B' ? RED : GREEN}`}>{side}</td>
              <td className="pr-0.5 text-right font-normal text-[#909090]">{n}</td>
            </tr>
          ))}
        </tbody>
      </table>
      <div className="mt-auto flex h-[18px] shrink-0 border-t border-[#800000] text-xs leading-4 text-[#e0e0e0]">
        {[...'笔价细势联值主筹'].map((t, i) => (
          <button key={t} type="button" className={`flex-1 border-r border-[#800000] ${i === 0 ? 'text-[#00e0e0]' : ''}`}>{t}</button>
        ))}
      </div>
    </aside>
  );
}

/* ---------- status bar ---------- */

function IndexQuote({ name, value, change, pct, amount, widths }: { name: string; value: string; change: string; pct: string; amount: string; widths: string[] }) {
  return (
    <div className="flex text-sm/[22px] font-bold text-[#ff0000]">
      <span className="w-[35px] text-base/[22px] font-normal text-black">{name}</span>
      <span className={widths[0]}>{value}</span>
      <span className={`text-right ${widths[1]}`}>{change}</span>
      <span className={`text-right ${widths[2]}`}>{pct}</span>
      <span className={`text-right text-black ${widths[3]}`}>
        {amount}
        <span className="text-base/4 font-normal">亿</span>
      </span>
    </div>
  );
}

function Meter({ red, green }: { red: string; green: string }) {
  return (
    <div className="w-[50px]">
      <div className="flex h-1.5 justify-center border border-white">
        <span className={`bg-[#ff0000] ${red}`} />
        <span className={`ml-px bg-[#008000] ${green}`} />
      </div>
      <div className="mt-0.5 flex gap-0.5 pl-1">
        {[0, 1, 2, 3, 4, 5].map((k) => (
          <span key={k} className="h-[5px] flex-1 border-y-2 border-[#ff0000]" />
        ))}
      </div>
    </div>
  );
}

function StatusBar() {
  return (
    <footer className="flex h-6 shrink-0 items-stretch border-t border-b border-t-white border-b-[#203040] bg-[#f0f0f0] leading-[22px] whitespace-nowrap">
      <IndexQuote name="上证" value="3333.66" change="11.43" pct="0.34%" amount="1671" widths={['w-[54px]', 'w-[50px]', 'w-[55px]', 'w-[64px]']} />
      <span className="w-[17px]" />
      <IndexQuote name="中证" value="6299.31" change="104.76" pct="1.69%" amount="714.2" widths={['w-[54px]', 'w-[54px]', 'w-[50px]', 'w-[69px]']} />
      <span className="w-3" />
      <IndexQuote name="创业" value="1793.87" change="32.97" pct="1.87%" amount="522.7" widths={['w-[54px]', 'w-[50px]', 'w-[54px]', 'w-[69px]']} />
      <div className="ml-3.5 flex w-[109px] gap-0.5 border-x border-[#a0a0a0] px-[3px] pt-1">
        <Meter red="w-3" green="w-2.5" />
        <Meter red="w-2" green="w-1" />
      </div>
      <span className="ml-1 text-xs leading-[22px]">华泰证券(上海电信8)</span>
    </footer>
  );
}

function ImeBar() {
  return (
    <div className="absolute right-0 bottom-0 flex h-[27px] w-[229px] items-center pl-8">
      <div className="absolute right-0 bottom-0 left-3 h-[26px] rounded-l border border-[#c8d4dc] bg-white" />
      <svg aria-hidden viewBox="0 0 28 28" className="absolute -top-0.5 left-0 h-7 w-7">
        <path d="M3 3 24 1q2 0 2.500 2L28 22q0 2-2 3L7 27q-2 0-3-2L1 6q0-2 2-3z" fill="#f4511e" />
        <path d="M22 6C13 4 6 6 7 10s14 3 14 7-8 6-14 3" fill="none" stroke="#fff" strokeWidth="4" />
      </svg>
      <div className="relative flex flex-1 items-center justify-between pr-1 text-[#12b048]">
        <button type="button" className="text-base/5 font-bold">中</button>
        <svg aria-label="半角" viewBox="0 0 16 16" className="h-4 w-4"><path d="M10 1c7 5 4 14-4 14-3 0-5-2-5.500-4C7 12 11 8 10 1z" fill="currentColor" /></svg>
        <svg aria-label="标点" viewBox="0 0 16 16" className="h-4 w-4">
          <circle cx="4" cy="5" r="2" fill="none" stroke="currentColor" strokeWidth="1.500" />
          <path d="M9 8h4v4l-3 3v-3H9z" fill="currentColor" />
        </svg>
        <Smile size={17} strokeWidth={2.5} />
        <Mic size={16} strokeWidth={2.5} fill="currentColor" />
        <Keyboard size={18} strokeWidth={2.2} />
        <svg aria-label="用户" viewBox="0 0 18 16" className="h-4 w-[18px] text-[#a8b8cc]">
          <circle cx="7" cy="4" r="3.500" fill="currentColor" />
          <path d="M1 15c0-9 12-9 12 0z" fill="currentColor" />
          <path d="M7 8h11v8H7z" fill="#8fa2ba" />
          <text x="8" y="15" fontSize="8" fontWeight="bold" fill="#fff">18</text>
        </svg>
        <Shirt size={16} fill="currentColor" />
        <Wrench size={15} fill="currentColor" />
      </div>
    </div>
  );
}

/* ---------- dialogs ---------- */

function DlgButton({ children, className = '' }: { children: ReactNode; className?: string }) {
  return (
    <button type="button" className={`border border-[#606060] bg-linear-to-b from-white to-[#d8d8d8] text-xs text-black shadow-[inset_0_0_0_2px_#f0f0f0] ${className}`}>
      {children}
    </button>
  );
}

function CloseGlyph() {
  return (
    <svg viewBox="0 0 12 10" className="mx-auto h-2.5 w-3">
      <path d="m2 1 8 8M10 1 2 9" stroke="#40485c" strokeWidth="4" />
      <path d="m2 1 8 8M10 1 2 9" stroke="#fff" strokeWidth="2.400" />
    </svg>
  );
}

function Expander() {
  return (
    <svg aria-hidden viewBox="0 0 9 9" className="h-[9px] w-[9px]">
      <path d="M.5.5h8v8h-8z" fill="#fff" stroke="#808080" />
      <path d="M2 4.500h5" stroke="#000" />
    </svg>
  );
}

function Folder({ pale }: { pale?: boolean }) {
  return (
    <svg aria-hidden viewBox="0 0 15 13" className="h-[13px] w-[15px]">
      <path d="M.5 2.500 2 .5h4l1.500 2h6v10H.5z" fill={pale ? '#e6e6a8' : '#e0e000'} stroke="#808080" />
      <path d="M14.500 3v10H1" fill="none" stroke="#000" />
    </svg>
  );
}

function ManagerDialog() {
  return (
    <div role="dialog" aria-label="公式管理器V6.00" className="absolute top-[131px] left-[488px] h-[596px] w-[464px] rounded-md border border-[#a0a0a0] bg-[#1c1e22] px-[5px] pb-[5px] shadow-[0_0_10px_4px_rgba(0,0,0,0.6)]">
      <div className="-mx-[5px] flex h-[27px] justify-between rounded-t bg-linear-to-r from-[#6c7074] via-[#16181c] to-[#44484c]">
        <h2 className="px-1.5 text-xs leading-[26px] text-black [text-shadow:0_0_6px_#b0b0b0,0_0_8px_#a0a0a0]">公式管理器V6.00</h2>
        <button type="button" aria-label="关闭" className="mr-1 h-5 w-[49px] rounded-b border border-t-0 border-[#8c9094] bg-[#303438]">
          <CloseGlyph />
        </button>
      </div>
      <div className="flex h-[562px] flex-col border border-[#909090] bg-[#f0f0f0] text-xs leading-4">
        <div role="tablist" className="mt-6 ml-[3px] flex items-end">
          <button role="tab" type="button" className="h-[19px] w-[51px] border-t border-r-2 border-l border-white border-r-[#606060]">公式组</button>
          {['全部', '系统', '用户'].map((t) => (
            <button key={t} role="tab" type="button" className="h-[17px] w-12 border-t border-r-2 border-white border-r-[#606060] pl-1 text-left">{t}</button>
          ))}
          <button role="tab" type="button" className="h-[17px] w-[71px] border-t border-r-2 border-white border-r-[#606060] pl-1 text-left whitespace-nowrap">按日期频度</button>
        </div>
        <div className="flex justify-between pr-[7px] pl-0.5">
          <div className="h-[487px] w-[365px] border border-[#808080] bg-white pt-0.5">
            <div className="flex items-center gap-0.5 pl-[5px]">
              <Expander />
              <span className="w-1 border-t border-dotted border-[#808080]" />
              <Folder />
              <span className="bg-[#ececec] px-0.5">技术指标公式</span>
            </div>
          </div>
          <div className="flex w-[66px] flex-col justify-between pb-px">
            <DlgButton className="h-[23px]">新　建</DlgButton>
            <div className="flex flex-col gap-1">
              <DlgButton className="h-[23px]">界面设置</DlgButton>
              <DlgButton className="h-[23px]">关　闭</DlgButton>
            </div>
          </div>
        </div>
        <a href="#forum" className="mt-2 ml-1.5 leading-4">访问通达信公式讨论区</a>
      </div>
    </div>
  );
}

function ImportDialog() {
  return (
    <div
      role="dialog"
      aria-label="导入公式"
      className="absolute top-[220px] left-[466px] h-[419px] w-[509px] rounded-md border border-[#e0e4e8] bg-linear-to-b from-[#70767c] via-[#1a2630] via-30% to-[#141c2c] px-[5px] pb-1.5 shadow-[0_2px_14px_6px_rgba(0,0,0,0.65)]"
    >
      <div className="-mx-[5px] flex h-[27px] justify-between rounded-t bg-[linear-gradient(to_right,#666a6e_0,#a8b0b8_60px,#c4d8ea_120px,#b8d9fb_150px,#b8d9fb_390px,#a8bccc_440px,#50565c_509px)]">
        <h2 className="px-1.5 text-xs leading-[26px] text-[#101418] [text-shadow:0_0_6px_#ccc]">导入公式</h2>
        <button type="button" aria-label="关闭" className="mr-1 h-[19px] w-12 rounded-b border border-t-0 border-[#e8d0c8] bg-linear-to-b from-[#e0a090] via-[#c03018] via-50% to-[#d86040]">
          <CloseGlyph />
        </button>
      </div>
      <div className="flex h-[385px] flex-col border border-[#303840] bg-[#f0f0f0] text-xs leading-4 outline outline-[#c8d0d8]">
        <div className="flex h-[356px] gap-0.5">
          <div className="w-[303px] border-r border-b border-[#808080] bg-white pt-0.5">
            <div className="flex items-center pl-1.5">
              <Expander />
              <span className="w-2 border-t border-dotted border-[#808080]" />
              <input id="n1" type="checkbox" className="h-[13px] w-[13px] appearance-none border-2 border-[#808080] bg-white" />
              <Folder pale />
              <label htmlFor="n1" className="ml-[5px] bg-[#3399ff] px-px leading-4 text-white outline outline-dotted -outline-offset-1 outline-[#c06000]">技术指标公式</label>
            </div>
            <div className="flex items-center pl-[25px]">
              <Expander />
              <span className="w-2 border-t border-dotted border-[#808080]" />
              <TreeCheck id="n2" />
              <svg aria-hidden viewBox="0 0 16 10" className="ml-0.5 h-2.5 w-4">
                <path d="M1 5h8M1 3v3M5 4v2" stroke="#303030" strokeWidth="1.300" />
                <circle cx="12" cy="5" r="3" fill="none" stroke="#303030" />
              </svg>
              <label htmlFor="n2" className="ml-[3px]">其他类型</label>
            </div>
            <div className="flex items-center pl-[48px]">
              <span className="mb-2 h-2 w-[13px] border-b border-l border-dotted border-[#808080]" />
              <TreeCheck id="n3" />
              <svg aria-hidden viewBox="0 0 16 11" className="ml-0.5 h-[11px] w-4">
                <path d="M2 3.500h5M0 5.500h6M2 7.500h5" stroke="#808080" strokeDasharray="2 1" />
                <path d="m11.500 0 4 4v4l-4 3-4-3V4z" fill="#e000e0" stroke="#200020" strokeWidth=".6" />
              </svg>
              <label htmlFor="n3" className="ml-1">三位一体演示</label>
            </div>
          </div>
          <div className="flex min-w-0 flex-1 flex-col">
            <div className="flex h-[83px] gap-[3px] pt-0.5 pl-1.5">
              <DlgButton className="h-[21px] w-[63px]">全部选中</DlgButton>
              <fieldset className="pt-[3px] whitespace-nowrap">
                <label className="flex items-center gap-[5px]">
                  <input type="radio" name="same" defaultChecked className="h-3 w-3 appearance-none rounded-full border border-[#808080] bg-white checked:bg-[radial-gradient(#000_0_2px,#fff_3px)]" />
                  不导入同名公式
                </label>
                <label className="flex items-center gap-[5px] leading-[15px]">
                  <input type="radio" name="same" className="h-3 w-3 appearance-none rounded-full border border-[#808080] bg-white" />
                  覆盖同名(非系统)
                </label>
              </fieldset>
            </div>
            <p className="mr-0.5 h-8 border-t border-l border-[#a0a0a0] leading-[15px]">技术指标公式</p>
            <div className="mr-px h-[139px] border border-[#808080] shadow-[inset_0_0_0_1px_#fff]" />
            <div className="mt-px mr-px h-[99px] border border-[#808080] shadow-[inset_0_0_0_1px_#fff]" />
          </div>
        </div>
        <div className="flex justify-end gap-5 pt-1 pr-2.5">
          <DlgButton className="h-[21px] w-[63px]">确定</DlgButton>
          <DlgButton className="h-[21px] w-[63px]">取消</DlgButton>
        </div>
      </div>
      <div className="mx-[22px] mt-px h-1 bg-[#b8d9fb]" />
    </div>
  );
}

function TreeCheck({ id }: { id: string }) {
  return (
    <span className="relative flex">
      <input id={id} type="checkbox" defaultChecked className="h-[13px] w-[13px] appearance-none border-2 border-[#808080] bg-white" />
      <svg aria-hidden viewBox="0 0 13 13" className="pointer-events-none absolute h-[13px] w-[13px]">
        <path d="m3 6 2.500 2.500L10 4" fill="none" stroke="#000" strokeWidth="2" />
      </svg>
    </span>
  );
}

export default function App() {
  return (
    <div className="relative flex h-screen w-full flex-col overflow-hidden border-r border-[#606060] bg-[#20262e] pl-px font-['Liberation_Sans','Noto_Sans_CJK_SC',sans-serif] text-black">
      <MenuBar />
      <ToolBar />
      <main className="flex min-h-0 flex-1 bg-[#0a0a0a]">
        <ChartArea />
        <QuotePanel />
      </main>
      <StatusBar />
      <ManagerDialog />
      <ImportDialog />
      <svg aria-hidden viewBox="0 0 132 132" className="pointer-events-none absolute top-[217px] left-[517px] h-[132px] w-[132px]">
        <circle cx="66" cy="66" r="64.500" fill="none" stroke="#ff0" strokeWidth="3" />
      </svg>
      <ImeBar />
    </div>
  );
}
